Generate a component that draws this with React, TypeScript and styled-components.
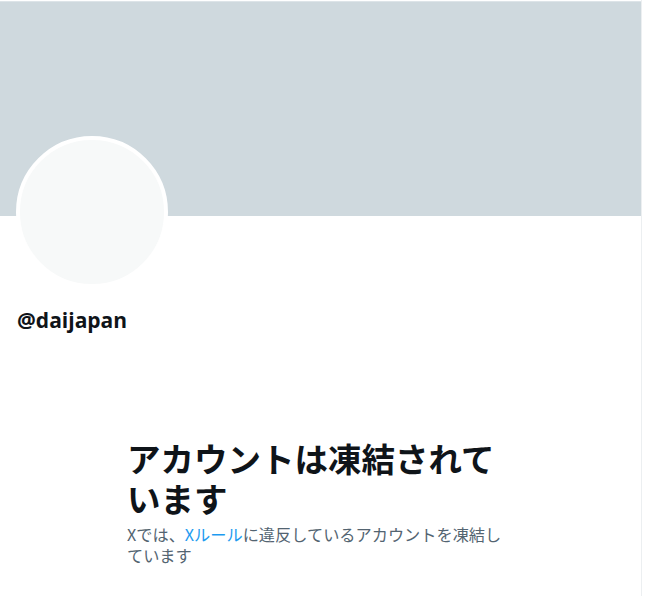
import React from 'react';
import styled, { createGlobalStyle } from 'styled-components';

const GlobalStyle = createGlobalStyle`
  html, body {
    margin: 0;
    padding: 0;
    background: #ffffff;
  }
  body {
    font-family: "Open Sans", "Noto Sans CJK JP", sans-serif;
  }
`;

const App: React.FC = () => {
  return (
    <>
      <GlobalStyle />
      <Page>
        <Banner />
        <ProfileHead>
          <Avatar />
          <Handle>@daijapan</Handle>
        </ProfileHead>
        <Notice>
          <Title>アカウントは凍結されています</Title>
          <Message>
            Xでは、<RuleLink href="#">Xルール</RuleLink>に違反しているアカウントを凍結しています
          </Message>
        </Notice>
      </Page>
    </>
  );
};

export default App;

const Page = styled.div`
  width: 641px;
  min-height: 596px;
  border-right: 1px solid #eceff1;
  box-sizing: content-box;
  display: flex;
  flex-direction: column;
`;

const Banner = styled.div`
  height: 214px;
  margin-top: 1px;
  background-color: #cfd9de;
  border-top: 1px solid #dde4e8;
`;

const ProfileHead = styled.div`
  padding: 0 16px;
  display: flex;
  flex-direction: column;
  align-items: flex-start;
`;

const Avatar = styled.div`
  width: 144px;
  height: 144px;
  margin-top: -80px;
  border-radius: 50%;
  border: 4px solid #ffffff;
  background-color: #f7f9f9;
`;

const Handle = styled.div`
  margin-top: 19px;
  margin-left: 1px;
  font-family: "Open Sans", "Noto Sans CJK JP", sans-serif;
  font-weight: 700;
  font-size: 21px;
  line-height: 26px;
  color: #0f1419;
`;

const Notice = styled.div`
  width: 384px;
  margin: 105px 0 0 127px;
  display: flex;
  flex-direction: column;
`;

const Title = styled.h1`
  margin: 0;
  font-family: "Noto Sans CJK JP", sans-serif;
  font-weight: 700;
  font-size: 33.5px;
  line-height: 40px;
  color: #0f1419;
`;

const Message = styled.p`
  margin: 6px 0 0;
  font-family: "Noto Sans CJK JP", sans-serif;
  font-size: 16.2px;
  line-height: 21px;
  color: #536471;
`;

const RuleLink = styled.a`
  color: #1d9bf0;
  text-decoration: none;
`;
